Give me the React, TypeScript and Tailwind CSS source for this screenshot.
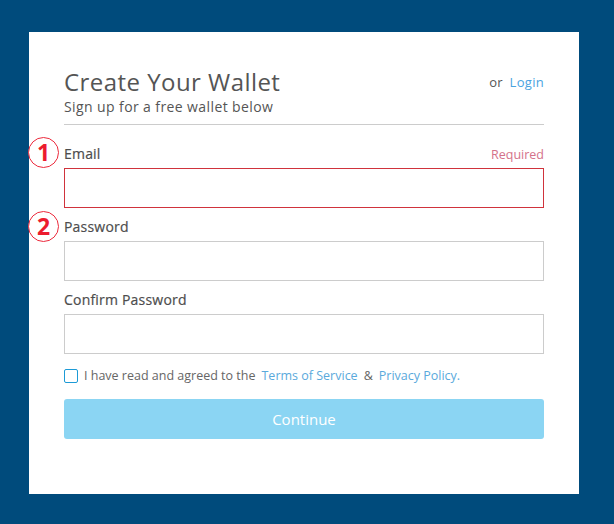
import React from "react";

const font = { fontFamily: '"Open Sans", "Liberation Sans", sans-serif' };

function Marker({ n, top }: { n: string; top: string }) {
  return (
    <div
      className={`absolute left-[28px] ${top} w-[31px] h-[31px] rounded-full border-[1.5px] border-[#ec2a3c] bg-white flex items-center justify-center text-[#ec1c2e] text-[23px] font-bold leading-none`}
      style={font}
    >
      {n}
    </div>
  );
}

export default function App() {
  return (
    <div className="relative w-[614px] h-[524px] bg-[#004b7c] pt-[32px] pl-[29px]" style={font}>
      <div className="w-[550px] h-[462px] bg-white pt-[36px] px-[35px]">
        <div className="flex justify-between items-start">
          <div>
            <div className="text-[24px] leading-[28px] text-[#555] tracking-[0.45px]">Create Your Wallet</div>
            <div className="text-[14px] leading-[18px] mt-[2px] text-[#555] tracking-[0.4px]">Sign up for a free wallet below</div>
          </div>
          <div className="text-[13px] mt-[5px] text-[#555] tracking-[0.3px]">
            or <span className="text-[#4aa3df] ml-[3px]">Login</span>
          </div>
        </div>
        <div className="h-px bg-[#ccc] mt-[8px]" />
        <div className="flex justify-between items-end mt-[20px]">
          <div className="text-[14px] leading-[18px] text-[#4d4d4d] tracking-[0.2px] [-webkit-text-stroke:0.2px_#4d4d4d]">Email</div>
          <div className="text-[12.5px] leading-[16px] text-[#d4728a]">Required</div>
        </div>
        <div className="h-[40px] border border-[#d0333c] mt-[5px]" />
        <div className="text-[14px] leading-[18px] text-[#4d4d4d] mt-[10px] tracking-[0.2px] [-webkit-text-stroke:0.2px_#4d4d4d]">Password</div>
        <div className="h-[40px] border border-[#ccc] mt-[5px]" />
        <div className="text-[14px] leading-[18px] text-[#4d4d4d] mt-[10px] tracking-[0.2px] [-webkit-text-stroke:0.2px_#4d4d4d]">Confirm Password</div>
        <div className="h-[40px] border border-[#ccc] mt-[5px]" />
        <div className="flex items-center mt-[14px] text-[12.5px] leading-[16px]">
          <div className="w-[14px] h-[14px] border border-[#1c9ad6] rounded-[2px] mr-[6px]" />
          <span className="text-[#666]">I have read and agreed to the</span>
          <span className="text-[#5aa9dc] ml-[6px]">Terms of Service</span>
          <span className="text-[#666] mx-[6px]">&amp;</span>
          <span className="text-[#5aa9dc]">Privacy Policy.</span>
        </div>
        <div className="h-[40px] mt-[15px] bg-[#8bd5f3] rounded-[3px] flex items-center justify-center text-white text-[15px]">
          Continue
        </div>
      </div>
      <Marker n="1" top="top-[137px]" />
      <Marker n="2" top="top-[211px]" />
    </div>
  );
}
